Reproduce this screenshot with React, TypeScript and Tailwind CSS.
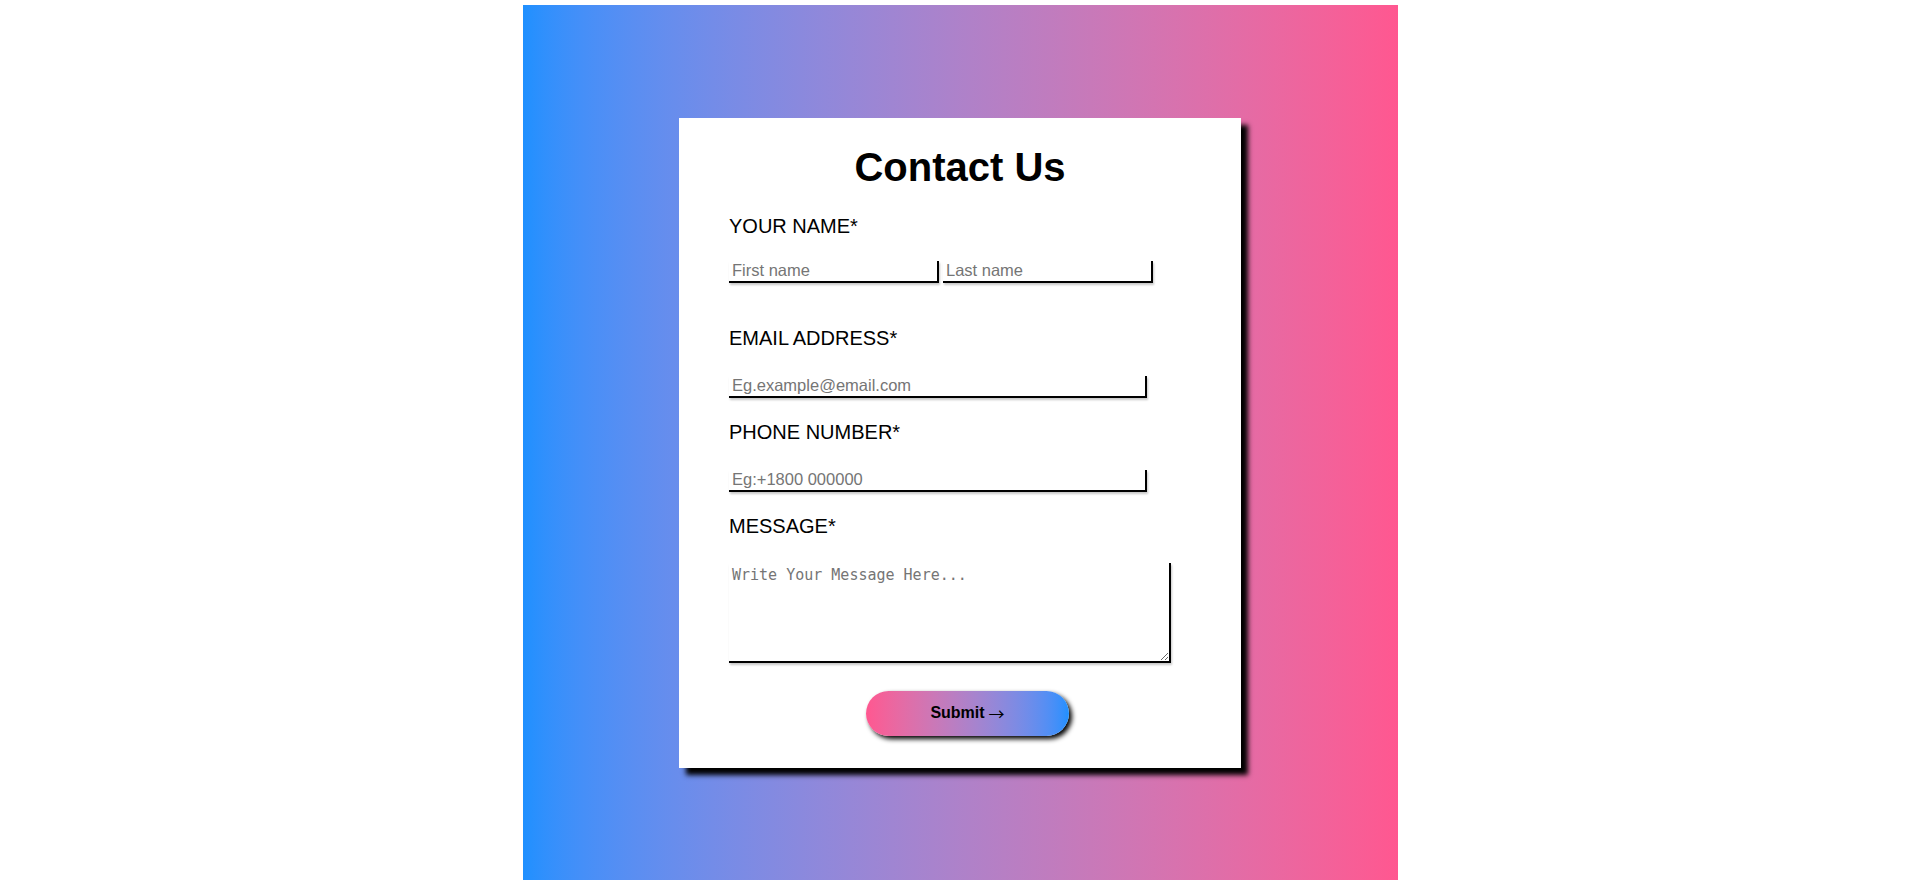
import React from "react";

export default function App() {
  const font = { fontFamily: '"Liberation Sans", Arial, sans-serif' };
  const inputCls =
    "h-[22px] border-0 border-r-2 border-b-2 border-solid border-black px-[3px] text-[16.5px] leading-[18px] shadow-[1px_2px_2px_#c8c8c8] outline-none placeholder:text-[#757575]";
  return (
    <div className="min-h-[884px] bg-white pt-[5px]" style={font}>
      <div className="mx-auto flex h-[875px] w-[875px] items-center justify-center bg-gradient-to-r from-[#1e90ff] to-[#ff5790]">
        <form
          className="flex h-[650px] w-[562px] flex-col bg-white px-[50px] pt-[27px] pb-[32px] text-black shadow-[7px_7px_5px_black]"
          onSubmit={(e) => e.preventDefault()}
        >
          <h1 className="text-center text-[40px] font-bold leading-[45px]">Contact Us</h1>

          <label className="mt-[25px] block text-[20px] leading-[23px]">YOUR NAME*</label>
          <div className="mt-[23px] flex gap-[4px]">
            <input type="text" placeholder="First name" className={`${inputCls} w-[210px]`} />
            <input type="text" placeholder="Last name" className={`${inputCls} w-[210px]`} />
          </div>

          <label className="mt-[44px] block text-[20px] leading-[23px]">EMAIL ADDRESS*</label>
          <input
            type="email"
            placeholder="Eg.example@email.com"
            className={`${inputCls} mt-[26px] w-[418px]`}
          />

          <label className="mt-[23px] block text-[20px] leading-[23px]">PHONE NUMBER*</label>
          <input
            type="tel"
            placeholder="Eg:+1800 000000"
            className={`${inputCls} mt-[26px] w-[418px]`}
          />

          <label className="mt-[23px] block text-[20px] leading-[23px]">MESSAGE*</label>
          <textarea
            placeholder="Write Your Message Here..."
            className="mt-[25px] h-[100px] w-[442px] resize border-0 border-r-2 border-b-2 border-solid border-black px-[3px] py-[1px] text-[15px] shadow-[1px_2px_2px_#c8c8c8] outline-none placeholder:text-[#757575]"
            style={{ fontFamily: '"DejaVu Sans Mono", "Liberation Mono", monospace' }}
          />

          <div className="mt-[28px] pl-[137px]">
            <button
              type="submit"
              className="flex h-[45px] w-[203px] items-center justify-center rounded-full bg-gradient-to-r from-[#ff5790] to-[#1e90ff] text-[16px] font-bold text-black shadow-[3px_3px_5px_black]"
            >
              <span>Submit</span>
              <span className="ml-[4px] font-normal leading-[18px]" style={{ fontFamily: '"Noto Sans CJK JP", sans-serif' }}>
                →
              </span>
            </button>
          </div>
        </form>
      </div>
    </div>
  );
}
